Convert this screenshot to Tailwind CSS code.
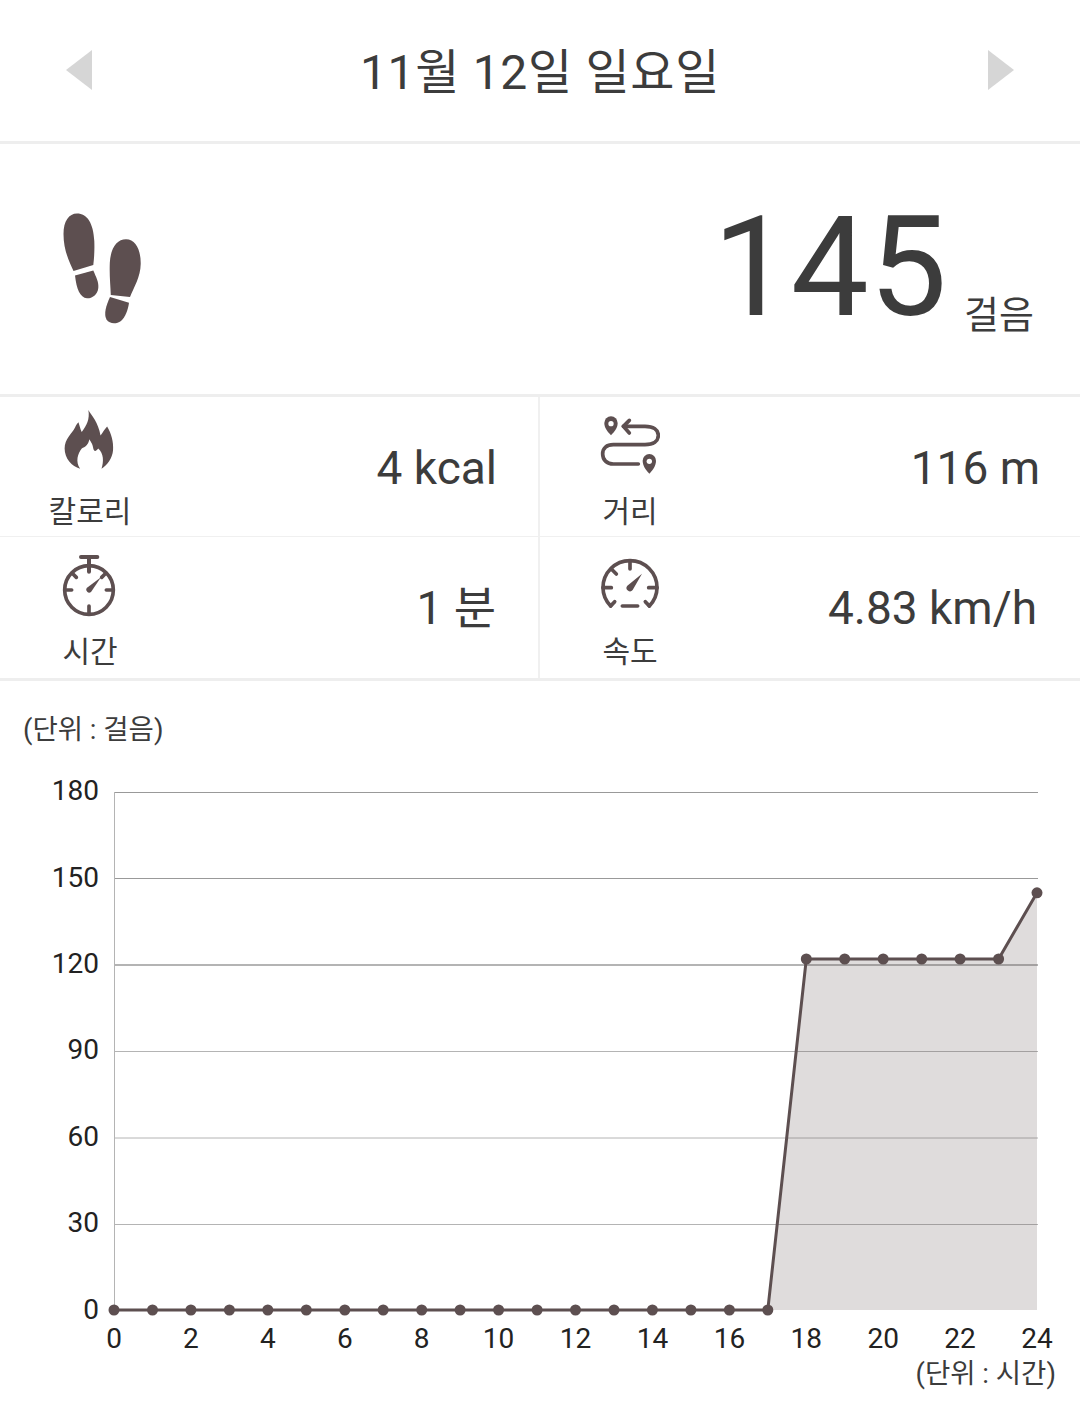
<!DOCTYPE html>
<html lang="ko">
<head>
  <meta charset="UTF-8">
  <title>걸음</title>
  <script src="https://cdn.jsdelivr.net/npm/@tailwindcss/browser@4"></script>
</head>
<body class="bg-white text-[#3c3c3c] font-['Roboto','Noto_Sans_CJK_KR',sans-serif]">
  <div class="w-[1080px] h-[1425px] overflow-hidden flex flex-col">

    <!-- date header -->
    <header class="h-[144px] shrink-0 border-b-[3px] border-[#eeeeee] flex items-center justify-between pl-[66px] pr-[66px]">
      <svg class="w-[26px] h-[40px] mb-[2px]" viewBox="0 0 26 40"><path d="M26 0V40L0 20Z" fill="#d6d6d6"/></svg>
      <h1 class="text-[48px] leading-none tracking-[0.7px] pt-[5px]">11월 12일 일요일</h1>
      <svg class="w-[26px] h-[40px] mb-[2px]" viewBox="0 0 26 40"><path d="M0 0V40L26 20Z" fill="#d6d6d6"/></svg>
    </header>

    <!-- total steps -->
    <section class="h-[253px] shrink-0 border-b-[3px] border-[#eeeeee] flex items-center justify-between pl-[40px] pr-[46px]">
      <svg class="w-[130px] h-[150px] mb-[7px]" viewBox="40 190 130 150" fill="#5d4f50">
        <path d="M63.500 233C63.500 220 69 212.500 77 212.500C87 212.500 93.500 222 94.300 240C94.700 250 94 258 93.300 264L73.500 270C70 262 63.500 250 63.500 233Z"/>
        <path d="M75 274.500L93.300 269.500C96 276 99 281 98.300 287C97.500 294 92 297.500 87 297.300C80 296.500 76.500 288 75 274.500Z"/>
        <path d="M109.800 262C110.500 247 117 238.300 126 238.300C136 238.300 141 250 140.700 263C140.500 276 134 286 130 296L110.800 294C110.500 284 109.300 275 109.800 262Z"/>
        <path d="M110 296L129 301.800C128 309 125.500 316 121 320C116 323.500 109.500 323 106.500 318.500C103.500 313 106 305 110 296Z"/>
      </svg>
      <div class="flex items-end mb-[4px]">
        <span class="text-[139px] leading-none">145</span>
        <span class="text-[38px] leading-none ml-[17px] mb-[3px]">걸음</span>
      </div>
    </section>

    <!-- stats -->
    <section class="h-[284px] shrink-0 border-b-[3px] border-[#eeeeee] grid grid-cols-2 grid-rows-[140px_141px]">
      <div class="border-r-2 border-b border-[#f0f0f0] flex items-start">
        <div class="w-[180px] h-full flex flex-col items-center pt-[11px]">
          <svg class="w-[56px] h-[65px] mr-[2px]" viewBox="92 28 170 195" fill="#5d4f50">
            <path d="M175 33C185 50 205 70 212 110C220 100 225 90 232 83C245 105 252 130 250 155C248 180 232 200 215 211C222 190 222 165 205 150C198 160 192 160 190 150C188 135 182 130 178 122C175 140 165 145 155 150C143 165 135 190 150 211C125 205 103 180 103 150C103 120 125 105 135 85C137 80 140 75 145 70C150 85 152 95 155 100C170 80 180 60 175 33Z"/>
          </svg>
          <span class="text-[30px] leading-none mt-[24px]">칼로리</span>
        </div>
        <span class="ml-auto pr-[41px] pt-[48px] text-[46px] leading-none">4 kcal</span>
      </div>
      <div class="border-b border-[#f0f0f0] flex items-start">
        <div class="w-[180px] h-full flex flex-col items-center pt-[16px]">
          <svg class="w-[60px] h-[65px]" viewBox="90 40 180 195" fill="none" stroke="#5d4f50" stroke-width="11" stroke-linecap="round" stroke-linejoin="round">
            <path d="M160 80H225C250 80 265 90 265 107C265 125 250 135 225 135H130C110 135 98 145 98 163C98 180 110 193 130 193H205"/>
            <path d="M178 62L160 80L178 100"/>
            <path d="M123 107C112 95 103 85 103 70A20 20 0 0 1 143 70C143 85 134 95 123 107Z" fill="#5d4f50" stroke="none"/>
            <circle cx="123" cy="72" r="8" fill="#fff" stroke="none"/>
            <path d="M238 222C227 210 218 198 218 183A20 20 0 0 1 258 183C258 198 249 210 238 222Z" fill="#5d4f50" stroke="none"/>
            <circle cx="238" cy="185" r="8" fill="#fff" stroke="none"/>
          </svg>
          <span class="text-[30px] leading-none mt-[19px]">거리</span>
        </div>
        <span class="ml-auto pr-[40px] pt-[48px] text-[46px] leading-none">116 m</span>
      </div>
      <div class="border-r-2 border-[#f0f0f0] flex items-start">
        <div class="w-[180px] h-full flex flex-col items-center pt-[17px]">
          <svg class="w-[60px] h-[65px] mr-[2px]" viewBox="86 462 180 195" fill="none" stroke="#5d4f50" stroke-width="11" stroke-linecap="round">
            <path d="M152 471H201M176 471V515" stroke-width="12"/>
            <circle cx="176" cy="570" r="73"/>
            <path d="M176 618V638M108 570H124M228 570H246M128 522L138 532M224 522L214 532"/>
            <path d="M169 564L212 532L182 576A9 9 0 0 1 169 564Z" fill="#5d4f50" stroke="none"/>
          </svg>
          <span class="text-[30px] leading-none mt-[18px]">시간</span>
        </div>
        <span class="ml-auto pr-[42px] pt-[48px] text-[46px] leading-none">1 분</span>
      </div>
      <div class="flex items-start">
        <div class="w-[180px] h-full flex flex-col items-center pt-[17px]">
          <svg class="w-[60px] h-[65px]" viewBox="90 462 180 195" fill="none" stroke="#5d4f50" stroke-width="11" stroke-linecap="round">
            <path d="M122 618C108 603 99 585 99 563A81 81 0 0 1 261 563C261 585 252 603 238 618"/>
            <path d="M122 618L134 605M238 618L226 605M180 485V507M99 563H124M261 563H236M124 507L139 522M157 618H203"/>
            <path d="M172 557L216 521L188 570A9 9 0 0 1 172 557Z" fill="#5d4f50" stroke="none"/>
          </svg>
          <span class="text-[30px] leading-none mt-[18px]">속도</span>
        </div>
        <span class="ml-auto pr-[43px] pt-[48px] text-[46px] leading-none">4.83 km/h</span>
      </div>
    </section>

    <!-- hourly chart -->
    <svg class="w-[1080px] h-[744px] shrink-0" viewBox="0 681 1080 744" font-family="Roboto, 'Noto Sans CJK KR', sans-serif" font-size="28" fill="#222222">
      <text x="23" y="739" fill="#3c3c3c" font-size="27.500">(단위 : 걸음)</text>

      <g stroke="#b4b4b4" stroke-width="1">
        <path d="M114 792.500H1038" stroke="#999999"/>
        <path d="M114 878.500H1038" stroke="#999999"/>
        <path d="M114 965H1038" stroke-width="2"/>
        <path d="M114 1051.500H1038"/>
        <path d="M114 1138H1038"/>
        <path d="M114 1224.500H1038"/>
        <path d="M114.500 792V1310"/>
      </g>

      <polygon points="767.800,1310 806.300,959 998.600,959 1037,892.800 1037,1310" fill="#5d4f50" fill-opacity="0.2"/>
      <polyline points="114,1310 767.800,1310 806.300,959 998.600,959 1037,892.800" fill="none" stroke="#5d4f50" stroke-width="3"/>

      <g fill="#5d4f50">
        <circle cx="114" cy="1310" r="5.500"/><circle cx="152.500" cy="1310" r="5.500"/><circle cx="190.900" cy="1310" r="5.500"/><circle cx="229.400" cy="1310" r="5.500"/><circle cx="267.800" cy="1310" r="5.500"/>
        <circle cx="306.300" cy="1310" r="5.500"/><circle cx="344.800" cy="1310" r="5.500"/><circle cx="383.200" cy="1310" r="5.500"/><circle cx="421.700" cy="1310" r="5.500"/><circle cx="460.100" cy="1310" r="5.500"/>
        <circle cx="498.600" cy="1310" r="5.500"/><circle cx="537.100" cy="1310" r="5.500"/><circle cx="575.500" cy="1310" r="5.500"/><circle cx="614" cy="1310" r="5.500"/><circle cx="652.400" cy="1310" r="5.500"/>
        <circle cx="690.900" cy="1310" r="5.500"/><circle cx="729.400" cy="1310" r="5.500"/><circle cx="767.800" cy="1310" r="5.500"/><circle cx="806.300" cy="959" r="5.500"/><circle cx="844.700" cy="959" r="5.500"/>
        <circle cx="883.200" cy="959" r="5.500"/><circle cx="921.700" cy="959" r="5.500"/><circle cx="960.100" cy="959" r="5.500"/><circle cx="998.600" cy="959" r="5.500"/><circle cx="1037" cy="892.800" r="5.500"/>
      </g>

      <g text-anchor="end">
        <text x="99" y="800">180</text>
        <text x="99" y="887">150</text>
        <text x="99" y="973">120</text>
        <text x="99" y="1059">90</text>
        <text x="99" y="1146">60</text>
        <text x="99" y="1232">30</text>
        <text x="99" y="1319">0</text>
      </g>
      <g text-anchor="middle">
        <text x="114" y="1348">0</text>
        <text x="190.900" y="1348">2</text>
        <text x="267.800" y="1348">4</text>
        <text x="344.800" y="1348">6</text>
        <text x="421.700" y="1348">8</text>
        <text x="498.600" y="1348">10</text>
        <text x="575.500" y="1348">12</text>
        <text x="652.400" y="1348">14</text>
        <text x="729.400" y="1348">16</text>
        <text x="806.300" y="1348">18</text>
        <text x="883.200" y="1348">20</text>
        <text x="960.100" y="1348">22</text>
        <text x="1037" y="1348">24</text>
      </g>
      <text x="1056" y="1383" text-anchor="end" fill="#3c3c3c" font-size="27.500">(단위 : 시간)</text>
    </svg>
  </div>
</body>
</html>
